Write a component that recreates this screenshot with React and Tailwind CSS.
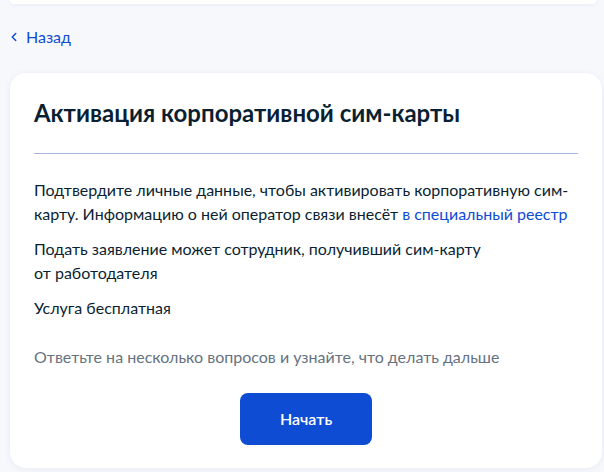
import { ChevronLeft } from 'lucide-react';

export default function App() {
  return (
    <div className="min-h-screen bg-[#f7f8fc] pl-[10px] pr-[2px] font-['Lato','Noto_Sans',sans-serif] text-[#0b1f33]">
      {/* bottom edge of the header block above */}
      <div className="mr-[6px] h-[4px] rounded-b-[8px] bg-white shadow-[0_1px_4px_rgba(150,160,200,0.15)]" />

      <a href="#" className="-ml-[3px] mt-[23px] flex items-center gap-[5px] text-[16px] leading-[20px] text-[#0d4cd3]">
        <ChevronLeft size={14} strokeWidth={2.5} />
        <span>Назад</span>
      </a>

      <div className="mt-[26px] rounded-[16px] bg-white px-[24px] pb-[23px] pt-[24px] shadow-[0_1px_6px_rgba(120,140,200,0.12)]">
        <h1 className="text-[24px] font-bold leading-[32px]">Активация корпоративной сим-карты</h1>
        <div className="mt-[24px] h-px bg-[#a7b4de]" />

        <div className="mt-[24px] flex flex-col gap-[11px] text-[16px] leading-[24px]">
          <p>
            Подтвердите личные данные, чтобы активировать корпоративную сим-карту. Информацию о ней оператор связи внесёт{' '}
            <a href="#" className="text-[#0d4cd3]">в специальный реестр</a>
          </p>
          <p>
            Подать заявление может сотрудник, получивший сим-карту
            <br />
            от работодателя
          </p>
          <p>Услуга бесплатная</p>
          <p className="mt-[14px] text-[#66727f]">Ответьте на несколько вопросов и узнайте, что делать дальше</p>
        </div>

        <div className="mt-[24px] flex justify-center">
          <button className="h-[52px] w-[132px] rounded-[8px] bg-[#0d4cd3] text-[16px] font-semibold text-white">
            Начать
          </button>
        </div>
      </div>
    </div>
  );
}
